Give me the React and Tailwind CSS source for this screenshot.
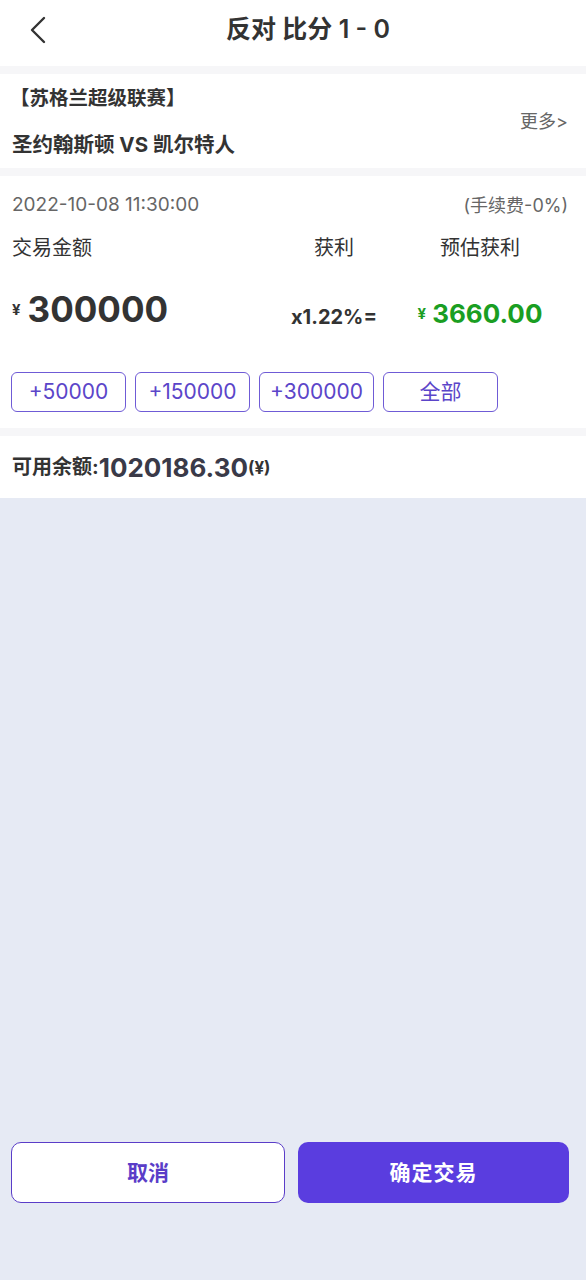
import React from "react";

const font = { fontFamily: 'Inter, "Noto Sans CJK SC", sans-serif' };

export default function App() {
  const chips = ["+50000", "+150000", "+300000", "全部"];
  return (
    <div className="h-[1280px] w-[586px] flex flex-col bg-[#e6eaf4] text-[#333]" style={font}>
      {/* header */}
      <div className="h-[66px] bg-white flex items-center pb-[6px]">
        <div className="w-[60px] h-full flex items-center pl-[28px]">
          <svg width="20" height="28" viewBox="0 0 20 28" fill="none">
            <polyline points="16,2 4,14 16,26" stroke="#333" strokeWidth="2.4" strokeLinecap="round" strokeLinejoin="round" />
          </svg>
        </div>
        <div className="flex-1 text-center text-[25px] font-semibold text-[#333]">反对 比分 1 - 0</div>
        <div className="w-[30px]" />
      </div>
      <div className="h-2 bg-[#f6f6f8]" />
      {/* league */}
      <div className="h-[94px] bg-white flex items-center justify-between pl-3 pr-[18px]">
        <div className="flex flex-col self-start pt-[10px]">
          <div className="h-[28px] leading-[28px] text-[19.5px] font-bold text-[#333] -ml-[2px]">【苏格兰超级联赛】</div>
          <div className="h-[28px] leading-[28px] text-[20.5px] font-bold text-[#333] mt-[19px]">圣约翰斯顿 VS 凯尔特人</div>
        </div>
        <div className="text-[18px] text-[#666]">更多&gt;</div>
      </div>
      <div className="h-2 bg-[#f6f6f8]" />
      {/* main */}
      <div className="bg-white pl-3 pr-[18px] pt-[15px] pb-[16px]">
        <div className="h-[28px] flex items-center justify-between text-[18px] text-[#666]">
          <span className="text-[19px]">2022-10-08 11:30:00</span>
          <span>(手续费-0%)</span>
        </div>
        <div className="mt-[14px] h-[28px] grid grid-cols-[1fr_146px_146px] items-center text-[20px] text-[#333] pr-[15px]">
          <span>交易金额</span>
          <span className="text-center">获利</span>
          <span className="text-center">预估获利</span>
        </div>
        <div className="mt-[25px] h-[44px] grid grid-cols-[1fr_146px_146px] items-center pr-[15px]">
          <div className="flex items-center font-bold text-[#333]">
            <span className="text-[15px] mr-[7px] mt-[2px]">¥</span>
            <span className="text-[35px] leading-none">300000</span>
          </div>
          <div className="text-center text-[20px] font-bold text-[#333] mt-[16px]">x1.22%=</div>
          <div className="text-center font-bold text-[#1a9e22] mt-[10px] flex items-center justify-center">
            <span className="text-[15px] mr-[6px]">¥</span>
            <span className="text-[26px] leading-none">3660.00</span>
          </div>
        </div>
        <div className="mt-[42px] flex gap-[9px] -ml-[1px]">
          {chips.map((c) => (
            <div key={c} className="w-[115px] h-[40px] border-[1.5px] border-[#6f5bd6] rounded-[6px] flex items-center justify-center text-[21px] text-[#5b45c9]">
              {c}
            </div>
          ))}
        </div>
      </div>
      <div className="h-2 bg-[#f6f6f8]" />
      {/* balance */}
      <div className="h-[62px] bg-white flex items-center pl-3 font-bold text-[#333]">
        <span className="text-[20px]">可用余额:</span>
        <span className="text-[26px] text-[#3a3a48]">1020186.30</span>
        <span className="text-[17px] mt-[4px]">(¥)</span>
      </div>
      <div className="flex-1" />
      {/* bottom buttons */}
      <div className="flex gap-[13px] pl-[11px] pr-[17px] pb-[77px]">
        <div className="w-[274px] h-[61px] bg-white border-[1.5px] border-[#5a3dc8] rounded-[10px] flex items-center justify-center text-[21px] font-bold text-[#5a3dc8]">
          取消
        </div>
        <div className="flex-1 h-[61px] bg-[#5a3ddf] rounded-[10px] flex items-center justify-center text-[21px] font-bold text-white tracking-[1px]">
          确定交易
        </div>
      </div>
    </div>
  );
}
